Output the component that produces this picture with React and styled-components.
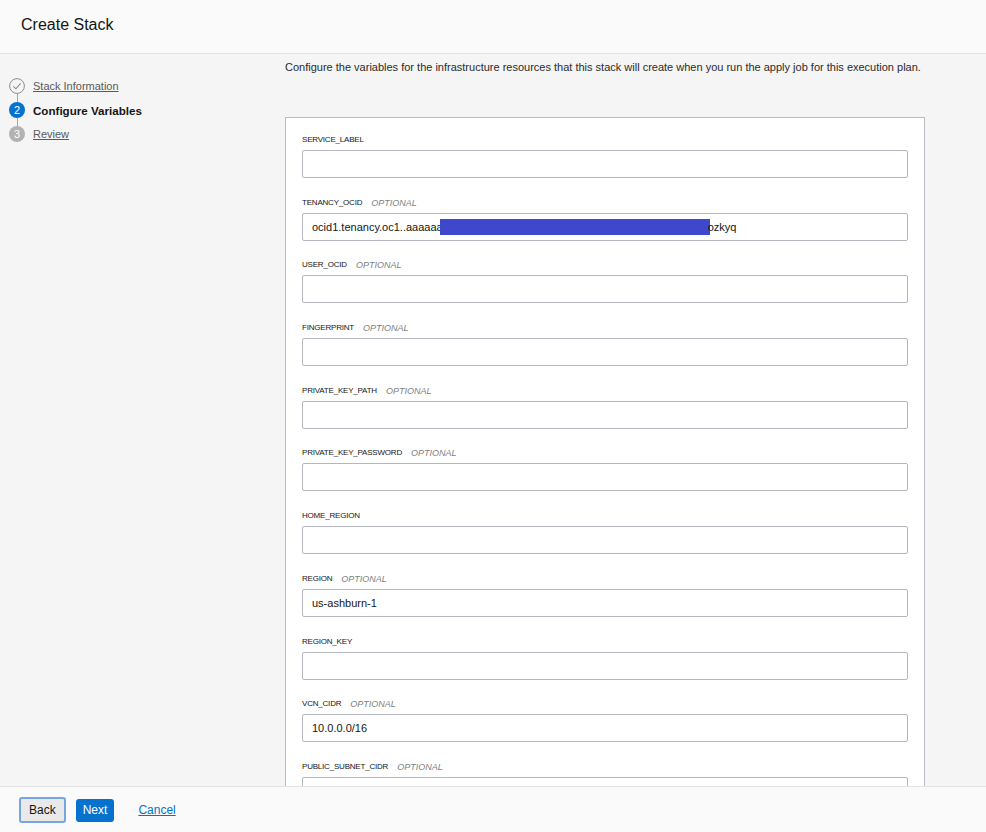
import React from "react";
import styled, { createGlobalStyle } from "styled-components";

const Global = createGlobalStyle`
  html, body { margin: 0; padding: 0; }
  body { font-family: "Liberation Sans", Arial, sans-serif; color: #161513; background: #f5f5f5; }
  * { box-sizing: border-box; }
`;

const Page = styled.div`
  height: 100vh;
  display: flex;
  flex-direction: column;
  overflow: hidden;
`;

const Header = styled.header`
  height: 54px;
  flex: none;
  background: #fafafa;
  border-bottom: 1px solid #e2e2e2;
  display: flex;
  align-items: center;
  padding: 0 0 4px 21px;
`;

const Title = styled.h1`
  margin: 0;
  font-size: 16px;
  font-weight: 400;
  color: #161513;
`;

const Body = styled.div`
  flex: 1;
  min-height: 0;
  display: flex;
  overflow: hidden;
  background: #f5f5f5;
`;

const Nav = styled.nav`
  width: 285px;
  flex: none;
  padding: 24px 0 0 9px;
  display: flex;
  flex-direction: column;
`;

const StepRow = styled.div`
  display: flex;
  align-items: center;
  height: 16px;
  gap: 8px;
`;

const Connector = styled.div`
  width: 1px;
  height: 8px;
  margin-left: 7.5px;
  background: #a8a8a8;
`;

const Marker = styled.span`
  width: 16px;
  height: 16px;
  border-radius: 50%;
  flex: none;
  display: flex;
  align-items: center;
  justify-content: center;
  background: ${(p) => p.$bg || "transparent"};
  color: #fff;
  font-size: 11px;
`;

const StepLabel = styled.a`
  font-size: ${(p) => (p.$active ? "11.6px" : "11px")};
  color: ${(p) => (p.$active ? "#161513" : "#5a5a5a")};
  font-weight: ${(p) => (p.$active ? 700 : 400)};
  text-decoration: ${(p) => (p.$active ? "none" : "underline")};
`;

const Content = styled.main`
  flex: 1;
  display: flex;
  flex-direction: column;
  padding-top: 7px;
`;

const Intro = styled.p`
  margin: 0 0 43px;
  font-size: 11px;
  line-height: 13px;
  color: #2b2b2b;
  white-space: nowrap;
`;

const Card = styled.section`
  width: 640px;
  background: #fff;
  border: 1px solid #b9bcc2;
  padding: 16px 16px 0;
`;

const Field = styled.div`
  display: flex;
  flex-direction: column;
  margin-bottom: ${(p) => (p.$last ? "0" : "18.7px")};
`;

const LabelRow = styled.div`
  height: 12px;
  line-height: 12px;
  margin-bottom: 4px;
  display: flex;
  align-items: center;
  gap: 9px;
`;

const Label = styled.span`
  font-size: 8px;
  color: #161513;
  letter-spacing: -0.2px;
`;

const Optional = styled.span`
  font-size: 9px;
  font-style: italic;
  color: #808080;
`;

const InputBox = styled.div`
  height: 28px;
  border: 1px solid #b4b7bd;
  border-radius: 2px;
  display: flex;
  align-items: center;
  padding: 0 9px;
  font-size: 11px;
  color: #161513;
  white-space: nowrap;
  overflow: hidden;
`;

const Redact = styled.span`
  display: inline-block;
  width: 270px;
  height: 16px;
  background: #3f48cc;
  margin-left: -3px;
  margin-right: -2px;
`;

const Footer = styled.footer`
  height: 46px;
  flex: none;
  background: #fafafa;
  border-top: 1px solid #e2e2e2;
  display: flex;
  align-items: center;
  padding: 0 0 0 19px;
  gap: 10px;
`;

const Button = styled.button`
  font-family: inherit;
  font-size: 12px;
  height: ${(p) => (p.$primary ? "23px" : "26px")};
  padding: 0 ${(p) => (p.$primary ? "7px" : "8px")};
  border-radius: 3px;
  border: ${(p) => (p.$primary ? "none" : "2px solid #76a6e2")};
  background: ${(p) => (p.$primary ? "#0572ce" : "#e9e9e9")};
  color: ${(p) => (p.$primary ? "#fff" : "#161513")};
  margin-top: 1px;
`;

const CancelLink = styled.a`
  font-size: 12px;
  color: #0572ce;
  text-decoration: underline;
  margin-left: 14px;
`;

const fields = [
  { name: "SERVICE_LABEL" },
  { name: "TENANCY_OCID", optional: true, tenancy: true },
  { name: "USER_OCID", optional: true },
  { name: "FINGERPRINT", optional: true },
  { name: "PRIVATE_KEY_PATH", optional: true },
  { name: "PRIVATE_KEY_PASSWORD", optional: true },
  { name: "HOME_REGION" },
  { name: "REGION", optional: true, value: "us-ashburn-1" },
  { name: "REGION_KEY" },
  { name: "VCN_CIDR", optional: true, value: "10.0.0.0/16" },
  { name: "PUBLIC_SUBNET_CIDR", optional: true },
];

const CheckIcon = () => (
  <svg width="16" height="16" viewBox="0 0 16 16">
    <circle cx="8" cy="8" r="7.4" fill="none" stroke="#8c8c8c" strokeWidth="1" />
    <path d="M4.3 8.3 L6.9 10.8 L11.6 5.3" fill="none" stroke="#8c8c8c" strokeWidth="1.1" />
  </svg>
);

export default function App() {
  return (
    <Page>
      <Global />
      <Header>
        <Title>Create Stack</Title>
      </Header>
      <Body>
        <Nav>
          <StepRow>
            <Marker>
              <CheckIcon />
            </Marker>
            <StepLabel>Stack Information</StepLabel>
          </StepRow>
          <Connector />
          <StepRow>
            <Marker $bg="#0572ce">2</Marker>
            <StepLabel $active>Configure Variables</StepLabel>
          </StepRow>
          <Connector />
          <StepRow>
            <Marker $bg="#b2b2b2">3</Marker>
            <StepLabel>Review</StepLabel>
          </StepRow>
        </Nav>
        <Content>
          <Intro>
            Configure the variables for the infrastructure resources that this stack will create when you run the apply job for this execution plan.
          </Intro>
          <Card>
            {fields.map((f, i) => (
              <Field key={f.name} $last={i === fields.length - 1}>
                <LabelRow>
                  <Label>{f.name}</Label>
                  {f.optional && <Optional>OPTIONAL</Optional>}
                </LabelRow>
                <InputBox>
                  {f.tenancy ? (
                    <>
                      ocid1.tenancy.oc1..aaaaaa
                      <Redact />
                      ozkyq
                    </>
                  ) : (
                    f.value || ""
                  )}
                </InputBox>
              </Field>
            ))}
          </Card>
        </Content>
      </Body>
      <Footer>
        <Button>Back</Button>
        <Button $primary>Next</Button>
        <CancelLink>Cancel</CancelLink>
      </Footer>
    </Page>
  );
}
